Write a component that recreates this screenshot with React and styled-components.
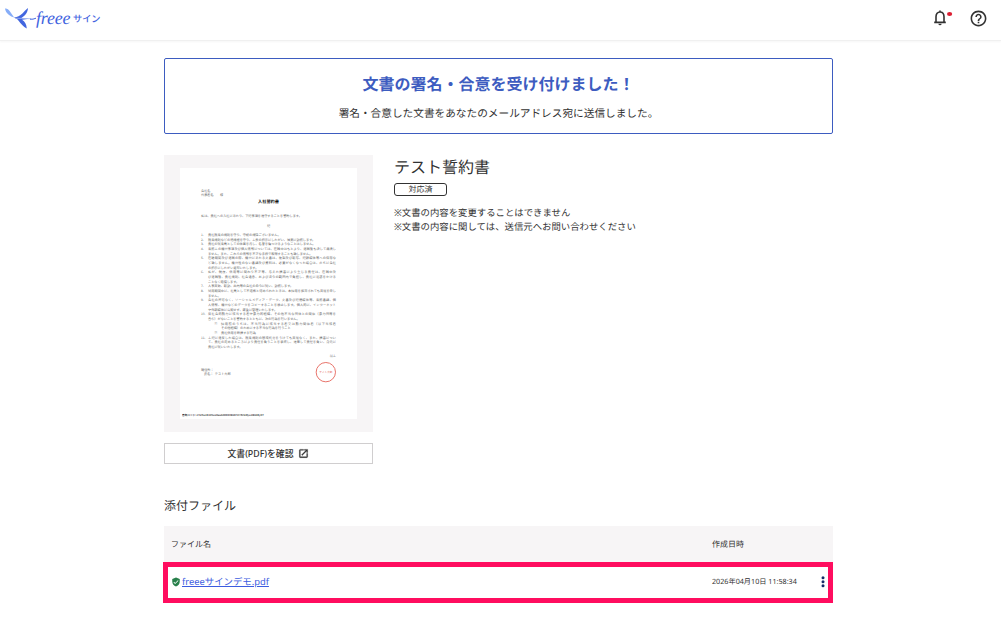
import React from "react";
import styled, { createGlobalStyle } from "styled-components";
import { MdHelpOutline, MdOpenInNew, MdVerifiedUser } from "react-icons/md";

const Colors = {
  text: "#323232",
  primary: "#3d5cc0",
  link: "#3c5ce0",
  navy: "#142c68",
  grey: "#f7f5f6",
  border: "#d0cecf",
  highlight: "#ff0d5f",
  green: "#28804b",
  red: "#dc1e32"
};

const GlobalStyle = createGlobalStyle`
  * {
    box-sizing: border-box;
  }

  body {
    margin: 0;
    background: #fff;
    color: ${Colors.text};
    font-family: "Noto Sans", "Noto Sans CJK JP", sans-serif;
    text-rendering: geometricPrecision;
  }

  h1, h2, p, ol {
    margin: 0;
    padding: 0;
    font-weight: 400;
  }
`;

const Header = styled.header`
  display: flex;
  justify-content: space-between;
  height: 41px;
  padding: 0 13px 4px 4px;
  border-bottom: 1px solid #f0f0f0;
  box-shadow: 0 1px 2px rgba(0, 0, 0, 0.04);
`;

const Logo = styled.div`
  display: flex;
  align-items: center;
  color: #3f63e0;
`;

const LogoName = styled.span`
  width: 37px;
  font: italic 18px/22px "Liberation Serif", serif;
  letter-spacing: -0.2px;
`;

const LogoProduct = styled.span`
  font-size: 9.2px;
  line-height: 14px;
  font-weight: 500;
  font-family: "Noto Sans CJK JP", sans-serif;
`;

const HeaderActions = styled.div`
  display: flex;
  align-items: center;
  gap: 16px;
`;

const Main = styled.main`
  width: 669px;
  margin: 17px 0 0 164px;
`;

const Notice = styled.section`
  height: 76px;
  padding-top: 13px;
  border: 1px solid ${Colors.primary};
  border-radius: 2px;
  text-align: center;
`;

const NoticeTitle = styled.h1`
  font-size: 16px;
  line-height: 24px;
  font-weight: 700;
  color: ${Colors.primary};
`;

const NoticeText = styled.p`
  margin-top: 10px;
  font-size: 10.667px;
  line-height: 16px;
`;

const Summary = styled.section`
  display: flex;
  gap: 21px;
  margin-top: 21px;
`;

const Preview = styled.div`
  width: 209px;
`;

const PreviewFrame = styled.div`
  height: 277px;
  padding: 13px 16px;
  background: ${Colors.grey};
`;

const PaperClip = styled.div`
  width: 177px;
  height: 251px;
  overflow: hidden;
  background: #fff;
`;

const Paper = styled.article`
  width: 531px;
  height: 753px;
  padding: 60px 63px 0;
  transform: scale(0.33333);
  transform-origin: 0 0;
  font-family: "Noto Sans CJK JP", sans-serif;
  font-size: 9.5px;
  line-height: 14px;
  color: #666;
`;

const PaperTitle = styled.h2`
  margin-top: 4px;
  font-size: 12.6px;
  line-height: 16px;
  font-weight: 700;
  text-align: center;
  color: #111;
`;

const PaperLine = styled.p`
  margin-top: ${props => props.$gap || 0}px;
  text-align: ${props => props.$align || "left"};
  white-space: nowrap;
`;

const Clauses = styled.ol`
  margin-top: 13px;
  list-style: none;
`;

const Clause = styled.li`
  display: grid;
  grid-template-columns: ${props => (props.$sub ? "20px" : "21px")} 1fr;
  padding-left: ${props => (props.$sub ? 40 : 0)}px;
`;

const ClauseLine = styled.p`
  height: 14px;

  &:not(:last-child) {
    text-align: justify;
    text-align-last: justify;
  }
`;

const SignRow = styled.div`
  display: flex;
  justify-content: space-between;
  align-items: flex-start;
  height: 100px;
`;

const Signer = styled.div`
  padding-top: 28px;
`;

const SignerName = styled.p`
  display: flex;
  gap: 4px;
  padding-left: 9px;
`;

const Seal = styled.div`
  width: 61px;
  height: 61px;
  margin-top: 13px;
  border: 3px solid #e8736a;
  border-radius: 50%;
  color: #e8736a;
  font-size: 8px;
  line-height: 55px;
  text-align: center;
`;

const PaperCode = styled.p`
  margin: 67px 0 0 -57px;
  font-size: 7.9px;
  font-weight: 500;
  color: #222;
  white-space: nowrap;
`;

const PdfButton = styled.button`
  display: flex;
  align-items: center;
  justify-content: center;
  gap: 5px;
  width: 100%;
  height: 21px;
  margin-top: 11px;
  padding: 0;
  border: 1px solid ${Colors.border};
  background: #fff;
  color: ${Colors.text};
  font-family: inherit;
  font-size: 8.8px;
  line-height: 14px;
  font-weight: 500;

  svg path:last-child {
    stroke-width: 0.8;
  }
`;

const Title = styled.h2`
  font-size: 16px;
  line-height: 24px;
`;

const Badge = styled.div`
  width: 53px;
  height: 13px;
  margin: 4px 0 10px;
  border: 1px solid ${Colors.text};
  border-radius: 3px;
  font-size: 8px;
  line-height: 11px;
  text-align: center;
`;

const Note = styled.p`
  font-size: 9.4px;
  line-height: 14px;
`;

const Heading = styled.h2`
  margin-top: 33px;
  font-size: 12px;
  line-height: 18px;
`;

const TableHead = styled.div`
  display: grid;
  grid-template-columns: 541px 1fr;
  align-items: center;
  height: 36px;
  margin-top: 11px;
  padding-left: 7px;
  background: ${Colors.grey};
  font-size: 8px;
`;

const TableRow = styled.div`
  display: grid;
  grid-template-columns: 541px 1fr 7px;
  align-items: center;
  width: 670px;
  height: 41px;
  margin-left: -1px;
  padding: 0 0 2px 3px;
  border: 5px solid ${Colors.highlight};
  font-size: 8px;
`;

const FileCell = styled.div`
  display: flex;
  align-items: center;
  gap: 1px;
`;

const FileLink = styled.a`
  color: ${Colors.link};
  font-size: 9.4px;
  line-height: 14px;
  text-decoration: underline;
`;

const DateCell = styled.time`
  padding-top: 1px;
  font-size: 7.2px;
`;

const clauses = [
  { no: "1.", lines: ["貴社就業の規則を守り、守秘の規律ございません。"] },
  { no: "2.", lines: ["就業規則などの諸規程を守り、上長の指示にしたがい、誠実に勤務します。"] },
  { no: "3.", lines: ["貴社の従業員としての体面を汚し、名誉を傷つけるようなことはしません。"] },
  {
    no: "4.",
    lines: [
      "業務上の機密事項及び個人情報については、在職中はもとより、退職後も決して漏洩し",
      "ません。また、これらの情報を不正な手段で取得することも致しません。"
    ]
  },
  {
    no: "5.",
    lines: [
      "在籍期間及び退職の際、機密にあたる文書は、複製及び転写、記録媒体等への保存な",
      "ど致しません。機密性のない書類及び資料は、必要がなくなった場合は、直ちに会社",
      "の指示にしたがい返却いたします。"
    ]
  },
  {
    no: "6.",
    lines: [
      "私が、健康、信用等に関わり不正等、与えた損害により生じる責任は、在職中及",
      "び退職後、貴社規則、社会通念、および法令の範囲内で負担し、貴社に迷惑をかける",
      "ことなく賠償します。"
    ]
  },
  { no: "7.", lines: ["人事異動、転勤、出向等の会社の命令に従い、勤務します。"] },
  {
    no: "8.",
    lines: [
      "試用期間中に、社員として不適格と認められたときは、本採用を拒否されても異議を申し",
      "ません。"
    ]
  },
  {
    no: "9.",
    lines: [
      "会社の許可なく、ソーシャルメディア・データ、文書及び記憶媒体等、業務書類、個",
      "人情報、機密などのデータをコピーすることを禁止します。個人的に、インターネット",
      "や外部媒体に公開せず、厳重に管理いたします。"
    ]
  },
  {
    no: "10.",
    lines: [
      "反社会的勢力に該当する者や暴力的組織、その他不当な団体との関係（暴力団等を",
      "含む）がないことを誓約するとともに、次の行為を行いません。"
    ]
  },
  {
    no: "①",
    sub: true,
    lines: [
      "採用前のうちは、不当行為に該当する者又は勢力関係者（以下当該者",
      "その他組織）のためにする不当な行為を行うこと"
    ]
  },
  { no: "②", sub: true, lines: ["貴社信用を毀損する行為"] },
  {
    no: "11.",
    lines: [
      "上記に違反した場合は、就業規則の懲戒処分をうけても異議なく、また、損害につい",
      "て、貴社の定めるところにより責任を負うことを承諾し、連帯して責任を負い、身元に",
      "貴社に従いいたします。"
    ]
  }
];

function LogoMark() {
  return (
    <svg width="32" height="22" viewBox="0 0 32 22">
      <path d="M1 1.6c2.2-.2 3.4.8 4.6 2.4l4.6 6.4C6.5 9.8 1.600 6.600 1 1.600z" fill="#86adf8" />
      <path
        d="M10 10.6c3.6-.6 5.8-1.6 8.4-4C20.4 4.6 22 2.4 24 1c-.2 4.2-2.8 7.7-6.6 9.9L25 11.8l-7 1c3 1.8 4.400 4.600 4.800 8.600-3.600-1.500-5.900-5-8.200-7.700-1.300-1.500-2.900-2.100-4.600-3.100z"
        fill="#4266df"
      />
      <path d="m11 11.2 16 .5" stroke="#a7baf3" strokeWidth=".8" />
      <path d="M26 12.2q3 .4 6-1" fill="none" stroke="#4266df" />
    </svg>
  );
}

function BellIcon() {
  return (
    <svg width="20" height="18" viewBox="0 0 20 18">
      <path
        d="M1.2 13.4h11.6M3 13V7.8C3 4.9 4.6 3 7 3s4 1.9 4 4.8V13M7 3V1.4"
        fill="none"
        stroke={Colors.text}
        strokeWidth="1.6"
      />
      <path d="M5.3 14.8h3.4q-.3 1.5-1.7 1.5t-1.7-1.5z" fill={Colors.text} />
      <ellipse cx="16.6" cy="5" rx="2.6" ry="2.1" fill={Colors.red} />
    </svg>
  );
}

function MoreIcon() {
  return (
    <svg width="4" height="12" viewBox="0 0 4 12" fill={Colors.navy}>
      <circle cx="2" cy="1.7" r="1.5" />
      <circle cx="2" cy="5.7" r="1.5" />
      <circle cx="2" cy="9.7" r="1.5" />
    </svg>
  );
}

function ContractPaper() {
  return (
    <PaperClip>
      <Paper>
        <PaperLine>会社名</PaperLine>
        <PaperLine>代表者名　　様</PaperLine>
        <PaperTitle>入社誓約書</PaperTitle>
        <PaperLine $gap={28}>私は、貴社への入社にあたり、下記事項を遵守することを誓約します。</PaperLine>
        <PaperLine $gap={16} $align="center">
          記
        </PaperLine>
        <Clauses>
          {clauses.map(clause => (
            <Clause key={clause.no} $sub={clause.sub}>
              <span>{clause.no}</span>
              <div>
                {clause.lines.map(line => (
                  <ClauseLine key={line}>{line}</ClauseLine>
                ))}
              </div>
            </Clause>
          ))}
        </Clauses>
        <PaperLine $gap={12} $align="right">
          以上
        </PaperLine>
        <SignRow>
          <Signer>
            <PaperLine>現住所：</PaperLine>
            <SignerName>
              <span>氏名：</span>
              <span>テスト太郎</span>
            </SignerName>
          </Signer>
          <Seal>テスト太郎</Seal>
        </SignRow>
        <PaperCode>書類コード: z7GfSusEUV5ux0auA8DH3tW4KfVi7BrGMyu4W48EyKT</PaperCode>
      </Paper>
    </PaperClip>
  );
}

export default function App() {
  return (
    <>
      <GlobalStyle />
      <Header>
        <Logo>
          <LogoMark />
          <LogoName>freee</LogoName>
          <LogoProduct>サイン</LogoProduct>
        </Logo>
        <HeaderActions>
          <BellIcon />
          <MdHelpOutline size={19} />
        </HeaderActions>
      </Header>
      <Main>
        <Notice>
          <NoticeTitle>文書の署名・合意を受け付けました！</NoticeTitle>
          <NoticeText>署名・合意した文書をあなたのメールアドレス宛に送信しました。</NoticeText>
        </Notice>
        <Summary>
          <Preview>
            <PreviewFrame>
              <ContractPaper />
            </PreviewFrame>
            <PdfButton>
              文書(PDF)を確認
              <MdOpenInNew size={11} />
            </PdfButton>
          </Preview>
          <div>
            <Title>テスト誓約書</Title>
            <Badge>対応済</Badge>
            <Note>※文書の内容を変更することはできません</Note>
            <Note>※文書の内容に関しては、送信元へお問い合わせください</Note>
          </div>
        </Summary>
        <Heading>添付ファイル</Heading>
        <TableHead>
          <span>ファイル名</span>
          <span>作成日時</span>
        </TableHead>
        <TableRow>
          <FileCell>
            <MdVerifiedUser size={10} color={Colors.green} />
            <FileLink>freeeサインデモ.pdf</FileLink>
          </FileCell>
          <DateCell>2026年04月10日 11:58:34</DateCell>
          <MoreIcon />
        </TableRow>
      </Main>
    </>
  );
}
